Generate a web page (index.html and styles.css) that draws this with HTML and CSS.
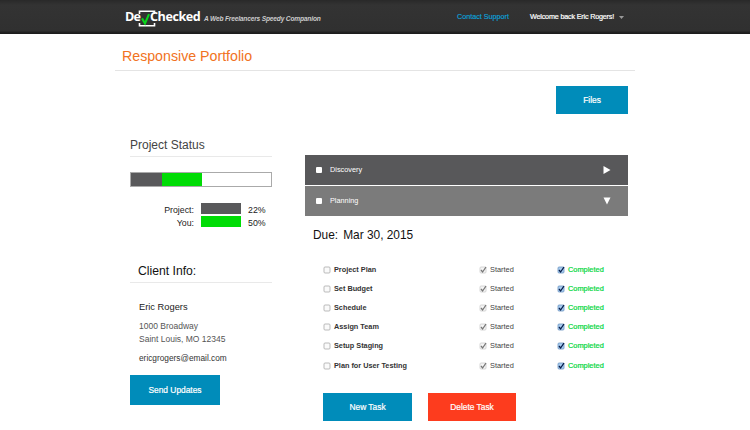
FILE: index.html
```html
<!DOCTYPE html>
<html lang="en">
<head>
<meta charset="utf-8">
<title>DevChecked</title>
<link rel="stylesheet" href="styles.css">
</head>
<body>
<header class="topbar">
  <div class="logo"><span class="de">De</span><svg class="mark" width="18" height="18" viewBox="0 0 18 18"><path d="M1.5 4V1.2H16.5V4M1.5 13V15.8H16.5V13" fill="none" stroke="#fff" stroke-width="1.6"/><path d="M4 8.4L7 13.5 11 4.2" fill="none" stroke="#09d51b" stroke-width="2.1"/></svg><span class="checked">Checked</span></div>
  <span class="tagline">A Web Freelancers Speedy Companion</span>
  <a class="support">Contact Support</a>
  <span class="welcome">Welcome back Eric Rogers!</span>
  <svg class="caret" width="5" height="3" viewBox="0 0 5 3"><path d="M0 0H5L2.5 3Z" fill="#999"/></svg>
</header>
<main class="page">
  <h1><span>Responsive Portfolio</span></h1>
  <div class="actions"><a class="btn files">Files</a></div>
  <div class="columns">
    <aside class="side">
      <h2 class="status">Project Status</h2>
      <div class="meter"><i class="project"></i><i class="you"></i></div>
      <dl class="legend">
        <dt>Project:</dt><dd class="swatch project"></dd><dd>22%</dd>
        <dt>You:</dt><dd class="swatch you"></dd><dd>50%</dd>
      </dl>
      <h2 class="client">Client Info:</h2>
      <div class="contact">
        <p class="name">Eric Rogers</p>
        <p class="street">1000 Broadway</p>
        <p class="city">Saint Louis, MO 12345</p>
        <p class="email">ericgrogers@email.com</p>
      </div>
      <a class="btn send">Send Updates</a>
    </aside>
    <section class="tasks">
      <div class="phase discovery"><i class="check"></i><span>Discovery</span><svg width="8" height="8" viewBox="0 0 8 8"><path d="M.5 0L7.5 4 .5 8Z" fill="#fff"/></svg></div>
      <div class="phase planning"><i class="check"></i><span>Planning</span><svg width="8" height="8" viewBox="0 0 8 8"><path d="M.5 .5H7.5L4 7.5Z" fill="#fff"/></svg></div>
      <p class="due"><span>Due:</span><span>Mar 30, 2015</span></p>
      <ul class="list"></ul>
      <div class="buttons"><a class="btn new">New Task</a><a class="btn delete">Delete Task</a></div>
    </section>
  </div>
</main>
<script src="tasks.js"></script>
</body>
</html>
```
FILE: styles.css
```css
* { box-sizing: border-box; margin: 0; padding: 0; }
body { width: 750px; height: 430px; overflow: hidden; background: #fff; color: #222; font: 8px/12px "Liberation Sans", Arial, sans-serif; white-space: nowrap; }
.topbar { display: flex; align-items: center; height: 34px; padding-left: 125px; background: linear-gradient(#292929, #333 15%, #303030 90%, #1d1d1d 97%); color: #fff; }
.logo { display: flex; align-items: center; width: 79px; height: 34px; font: bold 12.6px/18px "Open Sans", sans-serif; }
.de { width: 13px; letter-spacing: -.8px; }
.mark { flex: none; margin-top: 3px; }
.checked { margin-left: -6px; letter-spacing: -.45px; }
.logo span { position: relative; }
.tagline { width: 253px; margin-top: 4px; font-size: 6.6px; letter-spacing: -.17px; font-weight: bold; font-style: italic; color: #ccc; }
.support { width: 73px; color: #0ba2dc; font-size: 7.2px; -webkit-text-stroke: .15px #0ba2dc; }
.welcome { width: 89px; font-size: 7.2px; letter-spacing: -.18px; -webkit-text-stroke: .2px #fff; }
.caret { flex: none; }
.page { width: 520px; margin-left: 115px; }
h1 { height: 37px; padding: 13px 0 0 7px; border-bottom: 1px solid #e4e4e4; color: #f17222; font-size: 14.2px; font-weight: normal; line-height: 18px; }
.actions { display: flex; justify-content: flex-end; padding: 15px 7px 0 0; }
.btn { display: flex; align-items: center; justify-content: center; background: #008cba; color: #fff; font-size: 8.4px; -webkit-text-stroke: .2px #fff; }
.files { width: 72px; height: 28px; }
.columns { display: flex; gap: 33px; padding-left: 15px; }
.side { width: 142px; padding-top: 22px; }
h2 { border-bottom: 1px solid #e9e9e9; font-weight: normal; }
.status { height: 21px; color: #444; font-size: 12px; line-height: 18px; }
.meter { display: flex; height: 15px; margin-top: 15px; border: 1px solid #aaa; }
.project { background: #59595b; }
.you { background: #00dc05; }
.meter .project { width: 31px; }
.meter .you { width: 40px; }
.legend { display: grid; grid-template-columns: 64px 40px 1fr; grid-template-rows: 11px 11px; column-gap: 7px; row-gap: 2px; margin-top: 16px; font-size: 8.8px; line-height: 14px; }
.legend dt { text-align: right; }
.client { height: 22px; margin-top: 34px; padding-left: 8px; color: #111; font-size: 12.2px; line-height: 20px; }
.contact { padding: 17px 0 0 9px; color: #555; font-size: 8.5px; line-height: 13px; }
.name { margin-bottom: 6px; color: #222; font-size: 9.3px; line-height: 14px; }
.email { margin-top: 6px; color: #333; font-size: 8.3px; }
.send { width: 90px; height: 30px; margin-top: 10px; }
.tasks { width: 323px; padding-top: 41px; }
.phase { display: flex; align-items: center; height: 30px; padding: 0 17px 0 11px; color: #fff; font-size: 7.3px; }
.phase span { flex: 1; }
.discovery { background: #58585a; }
.planning { margin-top: 1px; background: #7b7b7b; }
.check { width: 6px; height: 6px; margin-right: 8px; border-radius: 1px; background: #fff; }
.due { display: flex; gap: 5px; padding: 10px 0 0 8px; color: #111; font-size: 11.9px; line-height: 18px; }
.list { padding: 16px 0 0 18px; list-style: none; }
.list li { display: grid; grid-template-columns: 156px 78px 1fr; height: 19.2px; align-items: center; }
.list span { display: flex; align-items: center; gap: 3px; }
.list .title { color: #333; font-size: 7.3px; font-weight: bold; }
.started { color: #444; font-size: 7.4px; }
.completed { color: #00d63b; font-size: 7.4px; -webkit-text-stroke: .2px #00d63b; }
.list svg { flex: none; }
.buttons { display: flex; gap: 16px; padding: 18px 0 0 18px; }
.new { width: 89px; height: 28px; }
.delete { width: 88px; height: 28px; background: #fd3c1e; }
```
FILE: tasks.js
```js
const names = ["Project Plan", "Set Budget", "Schedule", "Assign Team", "Setup Staging", "Plan for User Testing"];
const box = (fill, border, tick) => `<svg width="8" height="8" viewBox="0 0 8 8"><rect x="1" y="1" width="6" height="6" rx="1" fill="${fill}" stroke="${border}" stroke-width=".8"/>${tick ? `<path d="M2 4L3.6 6 7 1" fill="none" stroke="${tick}" stroke-width="1.3"/>` : ""}</svg>`;
document.querySelector(".list").innerHTML = names.map(name => `<li><span class="title">${box("#fafafa", "#aaa")}${name}</span><span class="started">${box("#f5f5f5", "#ccc", "#777")}Started</span><span class="completed">${box("#a9cdf0", "#6d95c0", "#061c49")}Completed</span></li>`).join("");
```
